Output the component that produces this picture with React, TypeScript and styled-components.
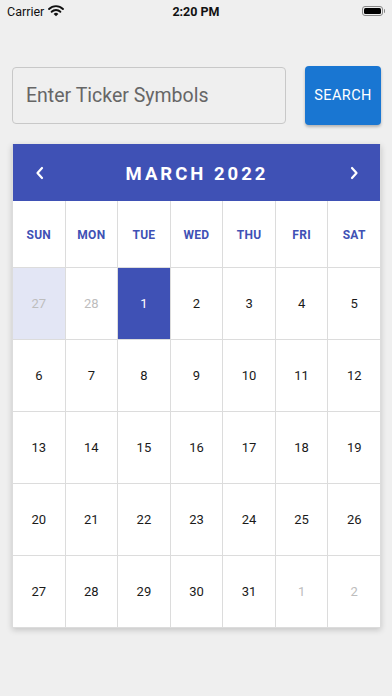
import React from "react";
import styled, { createGlobalStyle } from "styled-components";

const Global = createGlobalStyle`
  html, body { margin: 0; padding: 0; background: #efefef; }
  body { font-family: Roboto, "Liberation Sans", Arial, sans-serif; }
  * { box-sizing: border-box; }
`;

const Screen = styled.div`
  width: 392px;
  height: 696px;
  background: #efefef;
  overflow: hidden;
`;

const StatusBar = styled.div`
  height: 22px;
  display: grid;
  grid-template-columns: 1fr auto 1fr;
  align-items: center;
  padding: 0 7px;
  font-size: 12.5px;
  color: #111;
`;

const Carrier = styled.div`
  display: flex;
  align-items: center;
  gap: 4px;
`;

const Clock = styled.div`
  font-weight: 700;
  font-size: 12.5px;
`;

const Battery = styled.div`
  justify-self: end;
  display: flex;
  align-items: center;
`;

const BatteryBody = styled.div`
  width: 21px;
  height: 10px;
  border-radius: 3px;
  border: 1px solid #888;
  padding: 1px;
  display: flex;
  div {
    flex: 1;
    background: #000;
    border-radius: 1.5px;
  }
`;

const BatteryTip = styled.div`
  width: 1.5px;
  height: 4px;
  background: #888;
  border-radius: 0 1px 1px 0;
  margin-left: 1px;
`;

const Content = styled.div`
  padding: 45px 11px 0 12px;
`;

const SearchRow = styled.div`
  display: flex;
  gap: 19px;
  align-items: stretch;
  height: 58px;
`;

const Input = styled.input`
  flex: 1;
  min-width: 0;
  height: 57px;
  border: 1px solid #c8c8c8;
  border-radius: 4px;
  background: #efefef;
  padding: 0 13px;
  font-family: Roboto, "Liberation Sans", Arial, sans-serif;
  font-size: 19.5px;
  color: #333;
  outline: none;
  &::placeholder {
    color: #666;
  }
`;

const SearchButton = styled.button`
  width: 76px;
  height: 59px;
  margin-top: -1px;
  border: none;
  border-radius: 4px;
  background: #1976d2;
  color: #fff;
  font-family: Roboto, "Liberation Sans", Arial, sans-serif;
  font-size: 14.5px;
  letter-spacing: 0.4px;
  box-shadow: 0 2px 3px rgba(0, 0, 0, 0.25);
  padding: 0;
`;

const Card = styled.div`
  margin-top: 19px;
  width: 369px;
  background: #fff;
  box-shadow: 0 2px 6px rgba(0, 0, 0, 0.18);
  border: 1px solid #dcdcdc;
  border-top: none;
`;

const Header = styled.div`
  height: 57px;
  background: #3f51b5;
  display: flex;
  align-items: center;
  justify-content: space-between;
  padding: 0 20px 0 21px;
  color: #fff;
`;

const Title = styled.div`
  font-weight: 700;
  font-size: 18.5px;
  letter-spacing: 3px;
  margin-top: 2px;
`;

const Grid = styled.div`
  display: grid;
  grid-template-columns: repeat(7, 1fr);
  gap: 1px;
  background: #dcdcdc;
`;

const DayName = styled.div`
  height: 66px;
  background: #fff;
  display: flex;
  align-items: center;
  justify-content: center;
  padding-top: 2px;
  color: #3f51b5;
  font-weight: 700;
  font-size: 12px;
  letter-spacing: 0.3px;
`;

type Kind = "normal" | "muted" | "selected" | "faded";

const DateCell = styled.div<{ $kind: Kind }>`
  height: 71px;
  display: flex;
  align-items: center;
  justify-content: center;
  font-size: 13px;
  background: ${(p) =>
    p.$kind === "selected" ? "#3f51b5" : p.$kind === "faded" ? "#e3e6f5" : "#fff"};
  color: ${(p) =>
    p.$kind === "selected"
      ? "#fff"
      : p.$kind === "muted" || p.$kind === "faded"
      ? "#bdbdbd"
      : "#1a1a1a"};
`;

const Chevron = ({ dir }: { dir: "left" | "right" }) => (
  <svg width="12" height="16" viewBox="0 0 12 16" fill="none">
    <path
      d={dir === "left" ? "M8 3 L3.5 8 L8 13" : "M4 3 L8.5 8 L4 13"}
      stroke="#fff"
      strokeWidth="2.2"
      strokeLinecap="round"
      strokeLinejoin="round"
    />
  </svg>
);

const Wifi = () => (
  <svg width="16" height="12" viewBox="0 0 15 11">
    <path d="M7.5 10.5 L5.3 8.2 A3.2 3.2 0 0 1 9.7 8.2 Z" fill="#111" />
    <path
      d="M3.4 6.2 A5.8 5.8 0 0 1 11.6 6.2"
      stroke="#111"
      strokeWidth="1.8"
      fill="none"
      strokeLinecap="round"
    />
    <path
      d="M1 3.6 A9.2 9.2 0 0 1 14 3.6"
      stroke="#111"
      strokeWidth="1.8"
      fill="none"
      strokeLinecap="round"
    />
  </svg>
);

const dayNames = ["SUN", "MON", "TUE", "WED", "THU", "FRI", "SAT"];

const dates: { n: number; k: Kind }[] = [
  { n: 27, k: "faded" },
  { n: 28, k: "muted" },
  ...Array.from({ length: 31 }, (_, i) => ({
    n: i + 1,
    k: (i === 0 ? "selected" : "normal") as Kind,
  })),
  { n: 1, k: "muted" },
  { n: 2, k: "muted" },
];

export default function App() {
  return (
    <Screen>
      <Global />
      <StatusBar>
        <Carrier>
          Carrier <Wifi />
        </Carrier>
        <Clock>2:20 PM</Clock>
        <Battery>
          <BatteryBody>
            <div />
          </BatteryBody>
          <BatteryTip />
        </Battery>
      </StatusBar>
      <Content>
        <SearchRow>
          <Input placeholder="Enter Ticker Symbols" />
          <SearchButton>SEARCH</SearchButton>
        </SearchRow>
        <Card>
          <Header>
            <Chevron dir="left" />
            <Title>MARCH 2022</Title>
            <Chevron dir="right" />
          </Header>
          <Grid>
            {dayNames.map((d) => (
              <DayName key={d}>{d}</DayName>
            ))}
            {dates.map((d, i) => (
              <DateCell key={i} $kind={d.k}>
                {d.n}
              </DateCell>
            ))}
          </Grid>
        </Card>
      </Content>
    </Screen>
  );
}
